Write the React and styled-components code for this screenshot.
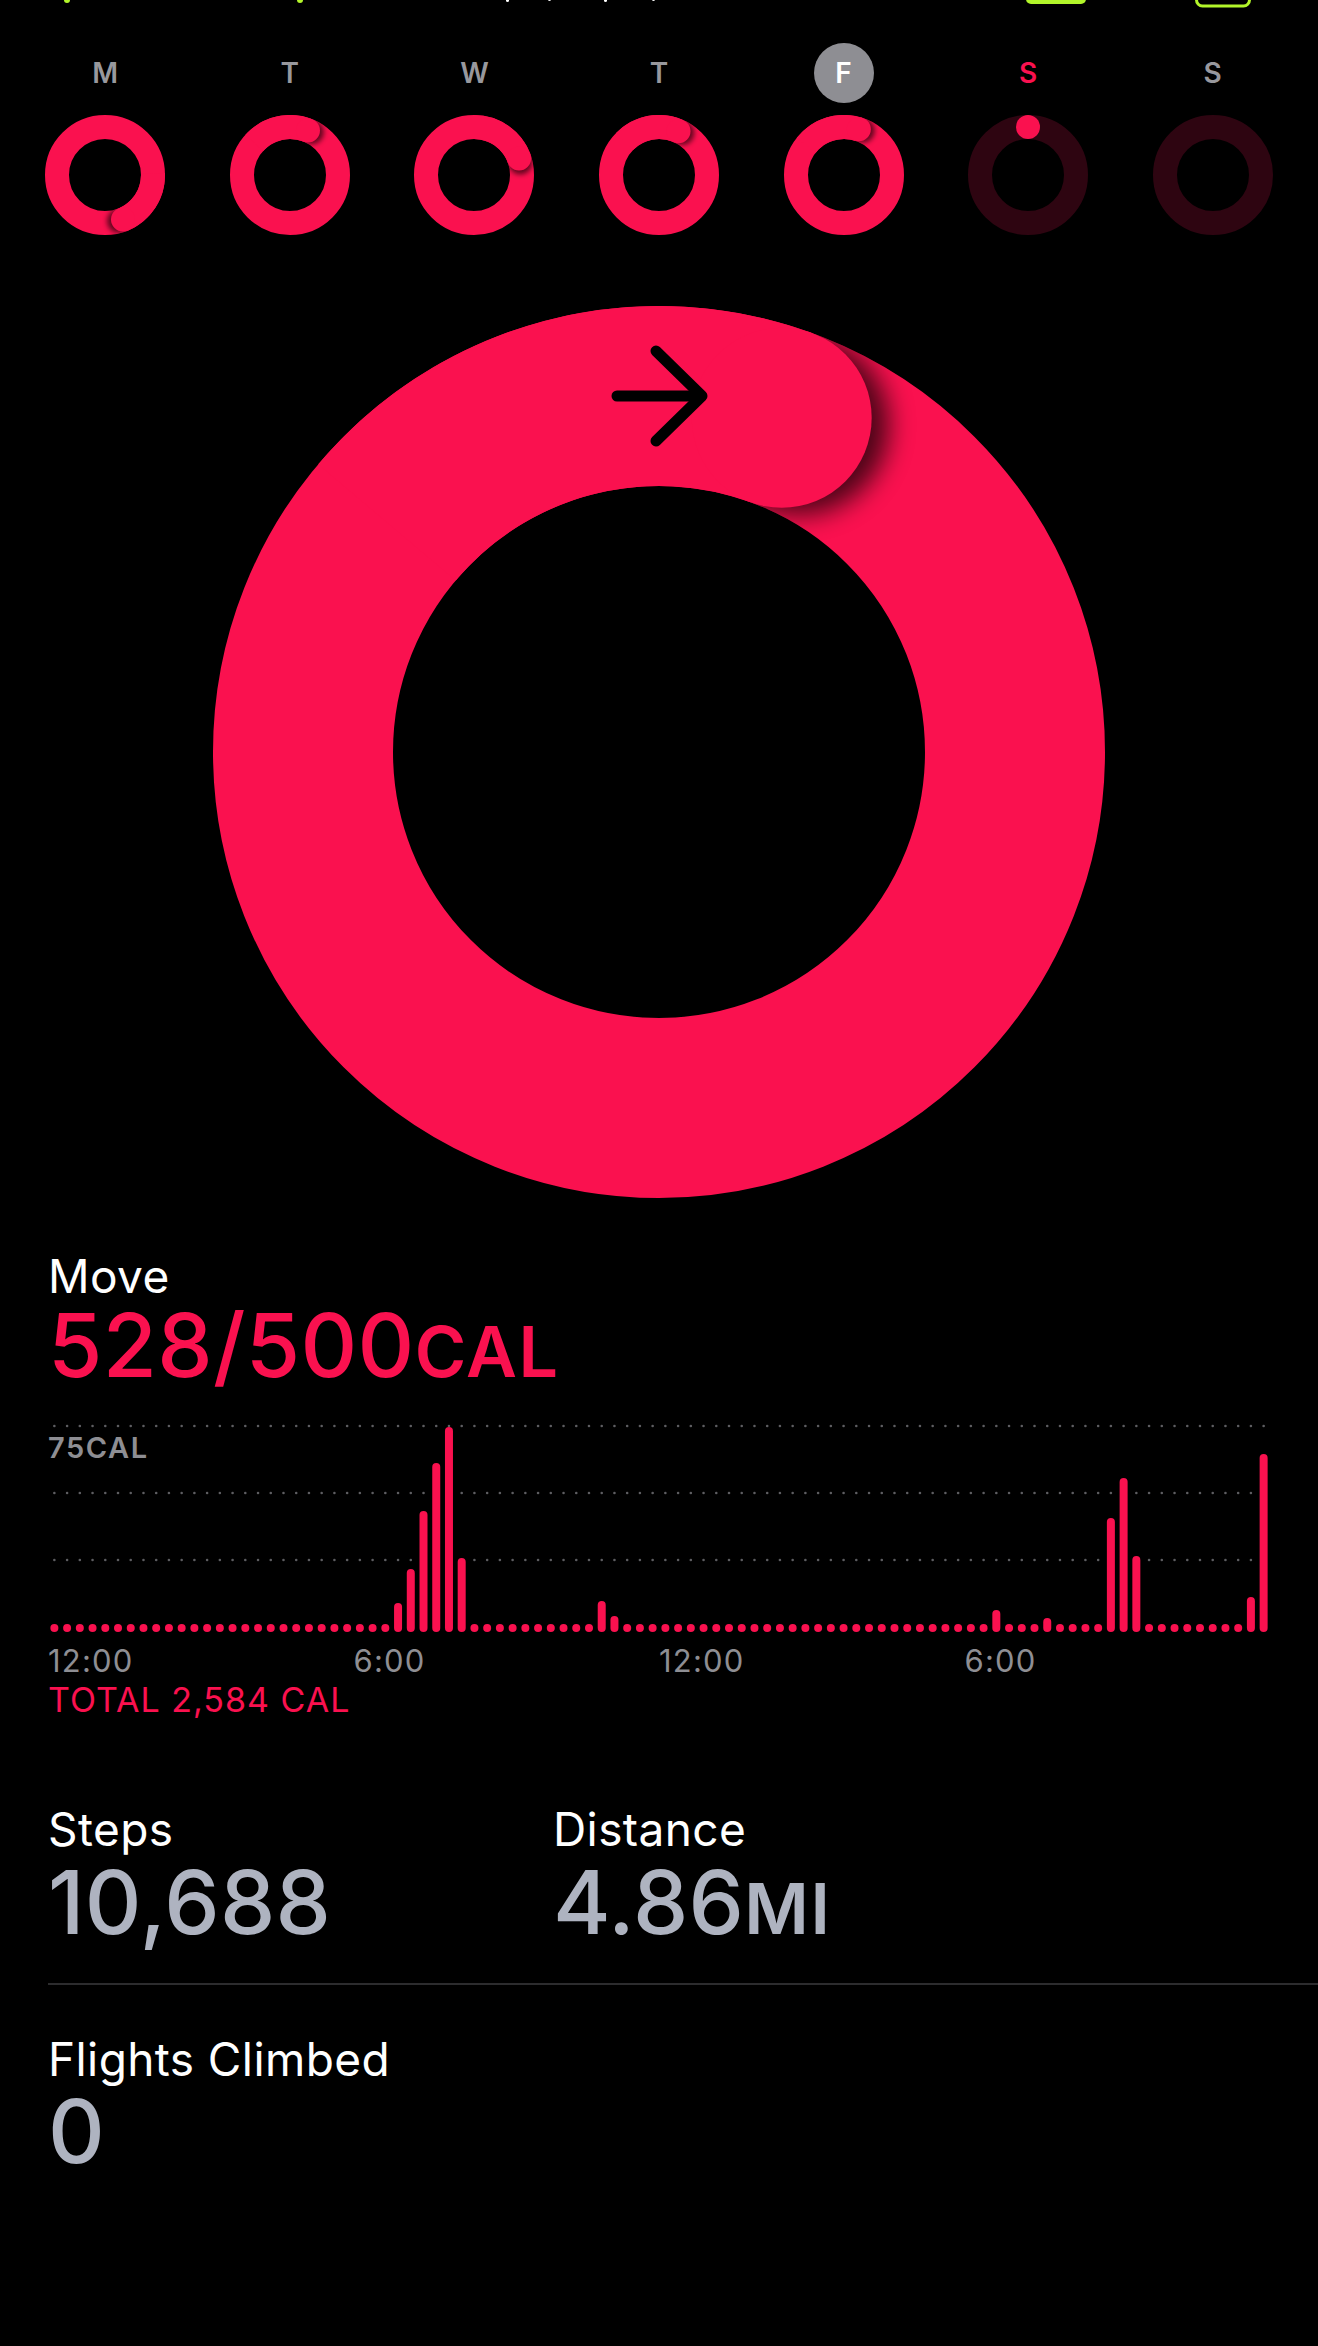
import React, { useId } from "react";
import styled, { createGlobalStyle } from "styled-components";

const RED = "#fa114f";
const TRACK = "#2e0511";

const GlobalStyle = createGlobalStyle`
  html, body {
    margin: 0;
    padding: 0;
    background: #000;
  }
  body {
    font-family: Inter, "Noto Sans", "Liberation Sans", sans-serif;
    color: #fff;
    min-height: 2346px;
  }
`;

const Page = styled.div`
  width: 1318px;
  min-height: 2346px;
  background: #000;
  overflow: hidden;
`;

const StatusStrip = styled.svg`
  display: block;
  width: 1318px;
  height: 10px;
`;

const WeekRow = styled.div`
  display: grid;
  grid-template-columns: repeat(7, 1fr);
  padding: 0 13px;
  margin-top: 33px;
`;

const Day = styled.div`
  display: flex;
  flex-direction: column;
  align-items: center;
  gap: 12px;
`;

const DayLabel = styled.div`
  width: 60px;
  height: 60px;
  border-radius: 50%;
  display: flex;
  align-items: center;
  justify-content: center;
  font-size: 28px;
  font-weight: 600;
  line-height: 1;
  background: ${(p) => (p.$today ? "#8e8e93" : "transparent")};
  color: ${(p) => (p.$today ? "#fff" : p.$current ? RED : "#98989d")};
`;

const HeroWrap = styled.div`
  display: flex;
  justify-content: center;
  margin-top: 71px;
`;

const Content = styled.div`
  padding-left: 48px;
`;

const Title = styled.div`
  font-size: 46px;
  line-height: ${(p) => p.$lh || 52}px;
  font-weight: 400;
  color: #fff;
  margin-top: ${(p) => p.$mt || 0}px;
  letter-spacing: 0.4px;
`;

const Value = styled.div`
  font-size: 88px;
  line-height: 88px;
  font-weight: 500;
  color: ${(p) => p.$color || "#aeb3c0"};
  margin-top: ${(p) => p.$mt || 0}px;
  letter-spacing: 0.3px;
  white-space: nowrap;
`;

const Unit = styled.span`
  font-size: 70px;
  font-weight: 600;
  letter-spacing: 1.5px;
`;

const ChartWrap = styled.div`
  position: relative;
  width: 1222px;
  margin-top: 26px;
`;

const ChartSvg = styled.svg`
  display: block;
`;

const AxisTag = styled.div`
  position: absolute;
  left: 0;
  top: 12px;
  font-size: 29px;
  line-height: 28px;
  font-weight: 600;
  letter-spacing: 1.6px;
  color: #8e8e93;
`;

const AxisRow = styled.div`
  display: grid;
  grid-template-columns: repeat(4, 1fr);
  width: 1222px;
  margin-top: 9px;
  font-size: 31px;
  line-height: 36px;
  letter-spacing: 1.2px;
  color: #8e8e93;
`;

const Total = styled.div`
  margin-top: 2px;
  font-size: 34px;
  line-height: 38px;
  color: ${RED};
  letter-spacing: 1px;
`;

const StatsRow = styled.div`
  display: grid;
  grid-template-columns: 505px 1fr;
  margin-top: ${(p) => p.$mt || 0}px;
`;

const Stat = styled.div`
  display: flex;
  flex-direction: column;
`;

const Divider = styled.div`
  height: 2px;
  background: #2c2c2e;
  margin-top: 30px;
`;

function Ring({ size, radius, width, progress, blur, shift, shadowOpacity = 0.6, children }) {
  const uid = useId().replace(/:/g, "");
  const c = size / 2;
  const pt = (deg) => {
    const a = (deg * Math.PI) / 180;
    return [c + radius * Math.sin(a), c - radius * Math.cos(a)];
  };
  const end = progress * 360;
  const arc = (from, to) => {
    const [x1, y1] = pt(from);
    const [x2, y2] = pt(to);
    const large = to - from > 180 ? 1 : 0;
    return `M ${x1} ${y1} A ${radius} ${radius} 0 ${large} 1 ${x2} ${y2}`;
  };
  const [ex, ey] = pt(end);
  const [sx, sy] = pt(end + shift);

  return (
    <svg width={size} height={size} viewBox={`0 0 ${size} ${size}`}>
      <defs>
        <mask id={`m${uid}`} maskUnits="userSpaceOnUse" x="0" y="0" width={size} height={size}>
          <circle cx={c} cy={c} r={radius} fill="none" stroke="#fff" strokeWidth={width} />
        </mask>
        <filter id={`f${uid}`} x="-100%" y="-100%" width="300%" height="300%">
          <feGaussianBlur stdDeviation={blur} />
        </filter>
      </defs>
      <circle
        cx={c}
        cy={c}
        r={radius}
        fill="none"
        stroke={progress >= 1 ? RED : TRACK}
        strokeWidth={width}
      />
      {progress > 0 && progress < 1 && progress * 360 < 2 && (
        <circle cx={c} cy={c - radius} r={width / 2} fill={RED} />
      )}
      {progress * 360 >= 2 && progress < 1 && (
        <path d={arc(0, end)} fill="none" stroke={RED} strokeWidth={width} strokeLinecap="round" />
      )}
      {progress > 1 && (
        <>
          <g mask={`url(#m${uid})`}>
            <circle
              cx={sx}
              cy={sy}
              r={width / 2}
              fill="#000"
              opacity={shadowOpacity}
              filter={`url(#f${uid})`}
            />
          </g>
          <path d={arc(end - 70, end)} fill="none" stroke={RED} strokeWidth={width} />
          <circle cx={ex} cy={ey} r={width / 2} fill={RED} />
        </>
      )}
      {children && children(pt(0))}
    </svg>
  );
}

const WEEK = [
  { label: "M", progress: 1 + 158 / 360 },
  { label: "T", progress: 1 + 22 / 360 },
  { label: "W", progress: 1 + 70 / 360 },
  { label: "T", progress: 1 + 24 / 360 },
  { label: "F", progress: 1 + 18 / 360, today: true },
  { label: "S", progress: 0.001, current: true },
  { label: "S", progress: 0 },
];

const BARS = {
  27: 29, 28: 63, 29: 121, 30: 169, 31: 205, 32: 74,
  43: 31, 44: 16,
  74: 22, 78: 14,
  83: 114, 84: 154, 85: 76,
  94: 35, 95: 178,
};

function MoveChart() {
  const w = 1222;
  const h = 212;
  const slot = w / 96;
  const base = 210;
  const slots = Array.from({ length: 96 }, (_, i) => i);
  return (
    <ChartSvg width={w} height={h} viewBox={`0 0 ${w} ${h}`}>
      {[4, 71, 138].map((y) =>
        slots.map((i) => (
          <circle key={`${y}-${i}`} cx={slot * i + slot / 2} cy={y} r={1.3} fill="#5e5e62" />
        ))
      )}
      {slots.map((i) => {
        const bh = BARS[i] || 8;
        return (
          <rect
            key={i}
            x={slot * i + slot / 2 - 4}
            y={base - bh}
            width={8}
            height={bh}
            rx={4}
            fill={RED}
          />
        );
      })}
    </ChartSvg>
  );
}

export default function App() {
  return (
    <Page>
      <GlobalStyle />
      <StatusStrip viewBox="0 0 1318 10">
        <rect x="64" y="-4" width="6" height="7" rx="3" fill="#b2f52a" />
        <rect x="297" y="-4" width="6" height="7" rx="3" fill="#b2f52a" />
        <rect x="506" y="-4" width="3" height="6" rx="1.5" fill="#fff" />
        <rect x="548" y="-4" width="3" height="5" rx="1.5" fill="#fff" />
        <rect x="604" y="-4" width="3" height="6" rx="1.5" fill="#fff" />
        <rect x="652" y="-4" width="3" height="5" rx="1.5" fill="#fff" />
        <rect x="1026" y="-10" width="60" height="14" rx="5" fill="#b2f52a" />
        <rect x="1196.5" y="-12" width="53" height="18" rx="6" fill="none" stroke="#b2f52a" strokeWidth="3" />
      </StatusStrip>

      <WeekRow>
        {WEEK.map((d, i) => (
          <Day key={i}>
            <DayLabel $today={d.today} $current={d.current}>
              {d.label}
            </DayLabel>
            <Ring size={120} radius={48} width={24} progress={d.progress} blur={2.5} shift={5} />
          </Day>
        ))}
      </WeekRow>

      <HeroWrap>
        <Ring size={892} radius={356} width={180} progress={528 / 500} blur={13} shift={3} shadowOpacity={0.7}>
          {([x, y]) => (
            <g fill="none" stroke="#000" strokeWidth="11" strokeLinecap="round" strokeLinejoin="round">
              <path d={`M ${x - 42} ${y} L ${x + 42} ${y}`} />
              <path d={`M ${x - 3} ${y - 45} L ${x + 43} ${y} L ${x - 3} ${y + 45}`} />
            </g>
          )}
        </Ring>
      </HeroWrap>

      <Content>
        <Title $lh={50} $mt={53}>Move</Title>
        <Value $color={RED}>
          528/500<Unit>CAL</Unit>
        </Value>

        <ChartWrap>
          <MoveChart />
          <AxisTag>75CAL</AxisTag>
        </ChartWrap>
        <AxisRow>
          <span>12:00</span>
          <span>6:00</span>
          <span>12:00</span>
          <span>6:00</span>
        </AxisRow>
        <Total>TOTAL 2,584 CAL</Total>

        <StatsRow $mt={84}>
          <Stat>
            <Title>Steps</Title>
            <Value $mt={3}>10,688</Value>
          </Stat>
          <Stat>
            <Title>Distance</Title>
            <Value $mt={3}>
              4.86<Unit>MI</Unit>
            </Value>
          </Stat>
        </StatsRow>
        <Divider />
        <StatsRow $mt={48}>
          <Stat>
            <Title>Flights Climbed</Title>
            <Value $mt={2}>0</Value>
          </Stat>
        </StatsRow>
      </Content>
    </Page>
  );
}
